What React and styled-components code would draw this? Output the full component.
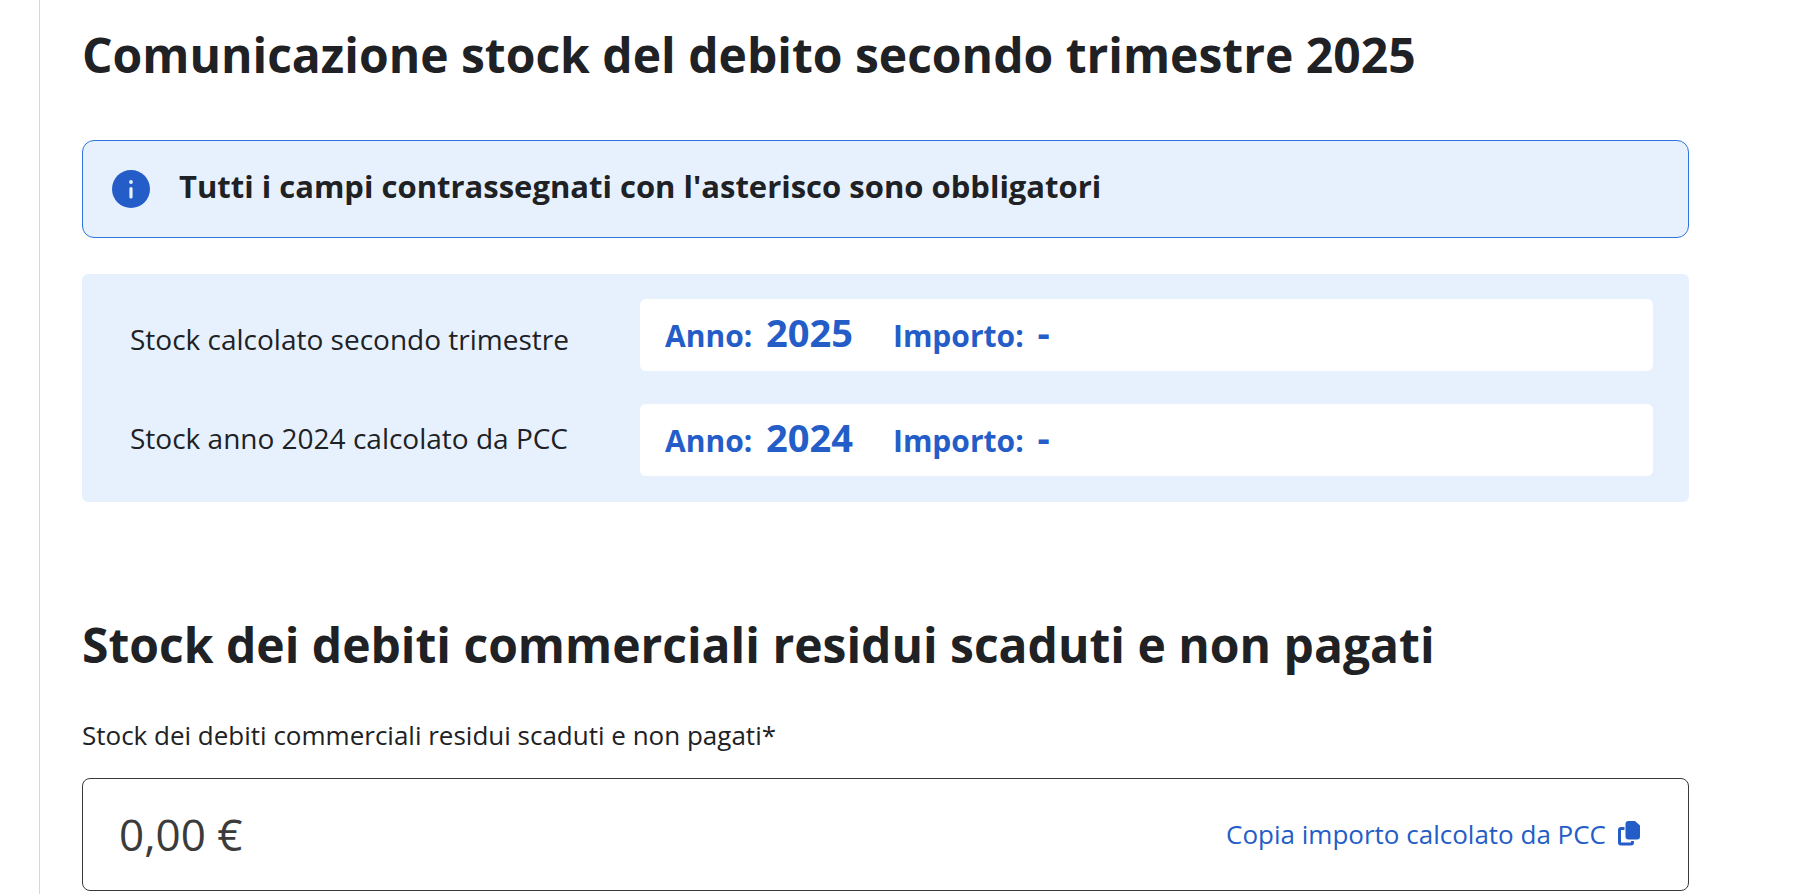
import React, { useState } from "react";
import styled, { createGlobalStyle } from "styled-components";

const GlobalStyle = createGlobalStyle`
  * {
    box-sizing: border-box;
  }
  body {
    margin: 0;
    background: #fff;
    color: #202124;
    font-family: "Open Sans", "Noto Sans", sans-serif;
  }
`;

const Page = styled.main`
  min-height: 100vh;
  margin-left: 39px;
  padding: 20px 111px 3px 42px;
  border-left: 1px solid #d6d7d9;
`;

const Title = styled.h1`
  margin: 0;
  font-size: 48px;
  line-height: 70px;
  font-weight: 700;
`;

const Alert = styled.div`
  display: flex;
  align-items: flex-start;
  gap: 29px;
  margin-top: 50px;
  padding: 29px;
  border: 1px solid #2f73dc;
  border-radius: 12px;
  background: #e7f1fe;
  font-size: 31px;
  line-height: 32px;
  font-weight: 700;
`;

const Summary = styled.section`
  display: flex;
  gap: 40px;
  margin-top: 36px;
  padding: 25px 36px 26px 48px;
  border-radius: 6px;
  background: #e7f1fe;
`;

const Labels = styled.div`
  display: flex;
  flex-direction: column;
  flex: 0 0 470px;
  gap: 63px;
  padding-top: 22px;
  font-size: 28px;
  line-height: 36px;
`;

const Amounts = styled.div`
  display: flex;
  flex-direction: column;
  flex: 1;
  gap: 33px;
`;

const Amount = styled.div`
  display: flex;
  align-items: baseline;
  gap: 40px;
  height: 72px;
  padding: 7px 25px;
  border-radius: 6px;
  background: #fff;
  color: #245dc7;
  font-size: 30px;
  line-height: 52px;
  font-weight: 700;
`;

const Figure = styled.strong`
  margin-left: 6px;
  font-size: 38px;
  font-weight: 700;
`;

const Field = styled.div`
  margin-top: 38px;
`;

const FieldLabel = styled.label`
  display: block;
  font-size: 26px;
  line-height: 34px;
`;

const InputBox = styled.div`
  display: flex;
  align-items: center;
  margin-top: 26px;
  height: 113px;
  padding: 0 48px 2px 36px;
  border: 1px solid #3a3a3c;
  border-radius: 8px;
`;

const Input = styled.input`
  flex: 1;
  min-width: 0;
  padding: 0;
  border: 0;
  outline: 0;
  background: none;
  color: #3b3b3b;
  font: inherit;
  font-size: 44px;
  line-height: 60px;
`;

const CopyButton = styled.button`
  display: flex;
  align-items: center;
  gap: 12px;
  padding: 0;
  border: 0;
  background: none;
  color: #245dc7;
  font: inherit;
  font-size: 26px;
  line-height: 34px;
  cursor: pointer;
`;

const Section = styled.section`
  margin-top: 108px;
`;

function InfoIcon() {
  return (
    <svg width="38" height="38" viewBox="0 0 38 38" aria-hidden="true">
      <circle cx="19" cy="19" r="19" fill="#245dc7" />
      <circle cx="19" cy="12" r="1.9" fill="#e7f1fe" />
      <rect x="17.4" y="17" width="3.2" height="11.5" rx="1.6" fill="#e7f1fe" />
    </svg>
  );
}

function CopyIcon() {
  return (
    <svg width="22" height="25" viewBox="0 0 22 25" aria-hidden="true">
      <path
        d="M6.5 7.5H3a1.5 1.5 0 0 0-1.5 1.5v12.5A1.5 1.5 0 0 0 3 23h10a1.5 1.5 0 0 0 1.5-1.5V20"
        fill="none"
        stroke="currentColor"
        strokeWidth="3"
      />
      <path
        d="M10.5 0H17l5 4.5v11a3 3 0 0 1-3 3h-8.5a3 3 0 0 1-3-3V3a3 3 0 0 1 3-3z"
        fill="currentColor"
      />
    </svg>
  );
}

const stocks = [
  { label: "Stock calcolato secondo trimestre", year: "2025", amount: "-" },
  { label: "Stock anno 2024 calcolato da PCC", year: "2024", amount: "-" }
];

export default function App() {
  const [value, setValue] = useState("0,00 €");
  return (
    <>
      <GlobalStyle />
      <Page>
        <Title>Comunicazione stock del debito secondo trimestre 2025</Title>
        <Alert>
          <InfoIcon />
          <span>Tutti i campi contrassegnati con l'asterisco sono obbligatori</span>
        </Alert>
        <Summary>
          <Labels>
            {stocks.map(s => (
              <span key={s.year}>{s.label}</span>
            ))}
          </Labels>
          <Amounts>
            {stocks.map(s => (
              <Amount key={s.year}>
                <span>
                  Anno: <Figure>{s.year}</Figure>
                </span>
                <span>
                  Importo: <Figure>{s.amount}</Figure>
                </span>
              </Amount>
            ))}
          </Amounts>
        </Summary>
        <Section>
          <Title as="h2">Stock dei debiti commerciali residui scaduti e non pagati</Title>
          <Field>
            <FieldLabel htmlFor="stock">
              Stock dei debiti commerciali residui scaduti e non pagati*
            </FieldLabel>
            <InputBox>
              <Input id="stock" value={value} onChange={e => setValue(e.target.value)} />
              <CopyButton type="button">
                Copia importo calcolato da PCC
                <CopyIcon />
              </CopyButton>
            </InputBox>
          </Field>
        </Section>
      </Page>
    </>
  );
}
